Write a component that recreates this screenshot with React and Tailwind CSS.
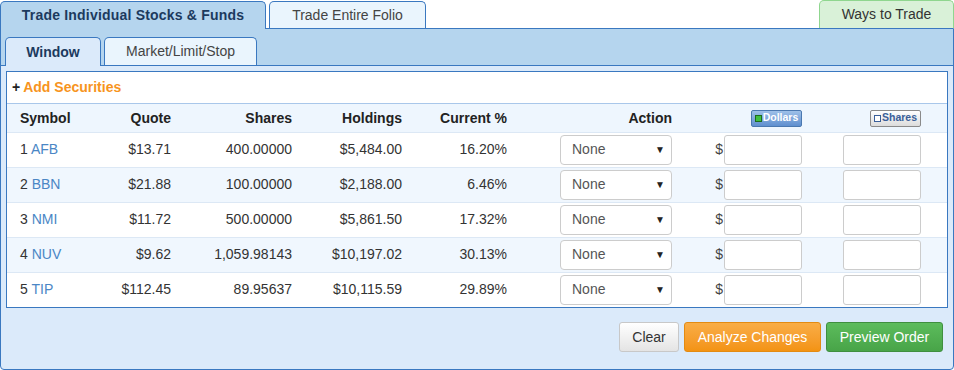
import React from 'react';

const rows = [
    {n: 1, sym: 'AFB', quote: '$13.71', shares: '400.00000', holdings: '$5,484.00', pct: '16.20%'},
    {n: 2, sym: 'BBN', quote: '$21.88', shares: '100.00000', holdings: '$2,188.00', pct: '6.46%'},
    {n: 3, sym: 'NMI', quote: '$11.72', shares: '500.00000', holdings: '$5,861.50', pct: '17.32%'},
    {n: 4, sym: 'NUV', quote: '$9.62', shares: '1,059.98143', holdings: '$10,197.02', pct: '30.13%'},
    {n: 5, sym: 'TIP', quote: '$112.45', shares: '89.95637', holdings: '$10,115.59', pct: '29.89%'},
];

function Row({r}) {
    const alt = r.n % 2 === 0;
    return (
        <div className={`flex h-[35px] items-center border-t border-[#dce8f5] pb-px text-[14px] text-[#333] ${alt ? 'bg-[#f0f7fe]' : 'bg-white'}`}>
            <div className="w-[100px] pl-[13px]">
                {r.n} <span className="text-[#4a86c5]">{r.sym}</span>
            </div>
            <div className="w-[64px] text-right">{r.quote}</div>
            <div className="w-[121px] text-right">{r.shares}</div>
            <div className="w-[110px] text-right">{r.holdings}</div>
            <div className="w-[105px] text-right">{r.pct}</div>
            <div className="flex w-[165px] justify-end">
                <div className="flex h-[30px] w-[112px] items-center justify-between rounded-[4px] border border-[#ccc] bg-white pl-[11px] pr-[6px] text-[#555]">
                    <span>None</span>
                    <span className="text-[10px] text-[#222]">▼</span>
                </div>
            </div>
            <div className="flex w-[130px] items-center justify-end">
                <span className="mr-px text-[#444]">$</span>
                <div className="h-[30px] w-[78px] rounded-[3px] border border-[#ccc] bg-white"></div>
            </div>
            <div className="flex w-[119px] justify-end">
                <div className="h-[30px] w-[78px] rounded-[3px] border border-[#ccc] bg-white"></div>
            </div>
        </div>
    );
}

export default function App() {
    return (
        <div className="h-[370px] w-[954px] bg-white font-['Liberation_Sans',Arial,sans-serif]">
            {/* top tabs */}
            <div className="flex h-[28px] items-end">
                <div className="relative z-10 -mb-px flex h-[28px] w-[266px] items-center justify-center rounded-t-[5px] border border-b-0 border-[#3a78c0] bg-[#b5d5ee] text-[14px] font-bold tracking-[0.2px] text-[#1c3a5e]">
                    Trade Individual Stocks &amp; Funds
                </div>
                <div className="ml-[3px] flex h-[27px] w-[157px] items-center justify-center rounded-t-[5px] border border-b-0 border-[#3a78c0] bg-[#eaf5fd] text-[14px] text-[#444]">
                    Trade Entire Folio
                </div>
                <div className="ml-auto flex h-[28px] w-[135px] items-center justify-center rounded-t-[5px] border border-b-0 border-[#8fd68f] bg-[#d9f1d8] text-[14px] text-[#333]">
                    Ways to Trade
                </div>
            </div>

            {/* panel */}
            <div className="flex h-[342px] flex-col rounded-b-[4px] border border-[#3a78c0] bg-[#dbeafa]">
                <div className="flex h-[37px] items-end border-b border-[#3a78c0] bg-[#b5d5ee] pl-[4px]">
                    <div className="relative -mb-px flex h-[29px] w-[96px] items-center justify-center rounded-t-[5px] border border-b-0 border-[#3a78c0] bg-[#dbeafa] text-[14px] font-bold text-[#1c3a5e]">
                        Window
                    </div>
                    <div className="ml-[3px] flex h-[28px] w-[153px] items-center justify-center rounded-t-[5px] border border-b-0 border-[#3a78c0] bg-[#eaf5fd] text-[14px] text-[#444]">
                        Market/Limit/Stop
                    </div>
                </div>

                <div className="px-[5px] pt-[5px]">
                    <div className="border border-[#3a78c0] bg-white">
                        <div className="flex h-[32px] items-center border-b border-[#a9c7ea] pl-[5px] text-[14px] font-bold">
                            <span className="text-[#222]">+</span>
                            <span className="ml-[3px] text-[#f7941d]">Add Securities</span>
                        </div>
                        <div className="flex h-[28px] items-center bg-[#eef6fe] text-[14px] font-bold text-[#222]">
                            <div className="w-[100px] pl-[13px]">Symbol</div>
                            <div className="w-[64px] text-right">Quote</div>
                            <div className="w-[121px] text-right">Shares</div>
                            <div className="w-[110px] text-right">Holdings</div>
                            <div className="w-[105px] text-right">Current %</div>
                            <div className="w-[165px] text-right">Action</div>
                            <div className="flex w-[130px] justify-end">
                                <div className="flex h-[17px] w-[51px] items-center justify-center gap-px rounded-[2px] border border-[#4a78b0] bg-gradient-to-b from-[#9ec0e8] to-[#5f8fcf] text-[10.5px] font-bold text-white">
                                    <span className="h-[7px] w-[7px] shrink-0 border border-[#1d6b1d] bg-[#3fbf3f]"></span>
                                    Dollars
                                </div>
                            </div>
                            <div className="flex w-[119px] justify-end">
                                <div className="flex h-[17px] w-[51px] items-center justify-center gap-px rounded-[2px] border border-[#8a8a8a] bg-gradient-to-b from-white to-[#dcdcdc] text-[10.5px] font-bold text-[#3a5f9a]">
                                    <span className="h-[7px] w-[7px] shrink-0 border border-[#3a5f9a] bg-white"></span>
                                    Shares
                                </div>
                            </div>
                        </div>
                        {rows.map((r) => <Row key={r.n} r={r}/>)}
                    </div>
                </div>

                <div className="mt-[14px] flex justify-end gap-[5px] pr-[10px] text-[14px]">
                    <button className="h-[30px] w-[60px] rounded-[3px] border border-[#c8c8c8] bg-gradient-to-b from-white to-[#e4e4e4] text-[#333]">
                        Clear
                    </button>
                    <button className="h-[30px] w-[137px] rounded-[3px] border border-[#e38b12] bg-gradient-to-b from-[#f9ad45] to-[#f39312] text-white">
                        Analyze Changes
                    </button>
                    <button className="h-[30px] w-[117px] rounded-[3px] border border-[#3f8f3f] bg-gradient-to-b from-[#5cbc5c] to-[#48a448] text-white">
                        Preview Order
                    </button>
                </div>
            </div>
        </div>
    );
}
